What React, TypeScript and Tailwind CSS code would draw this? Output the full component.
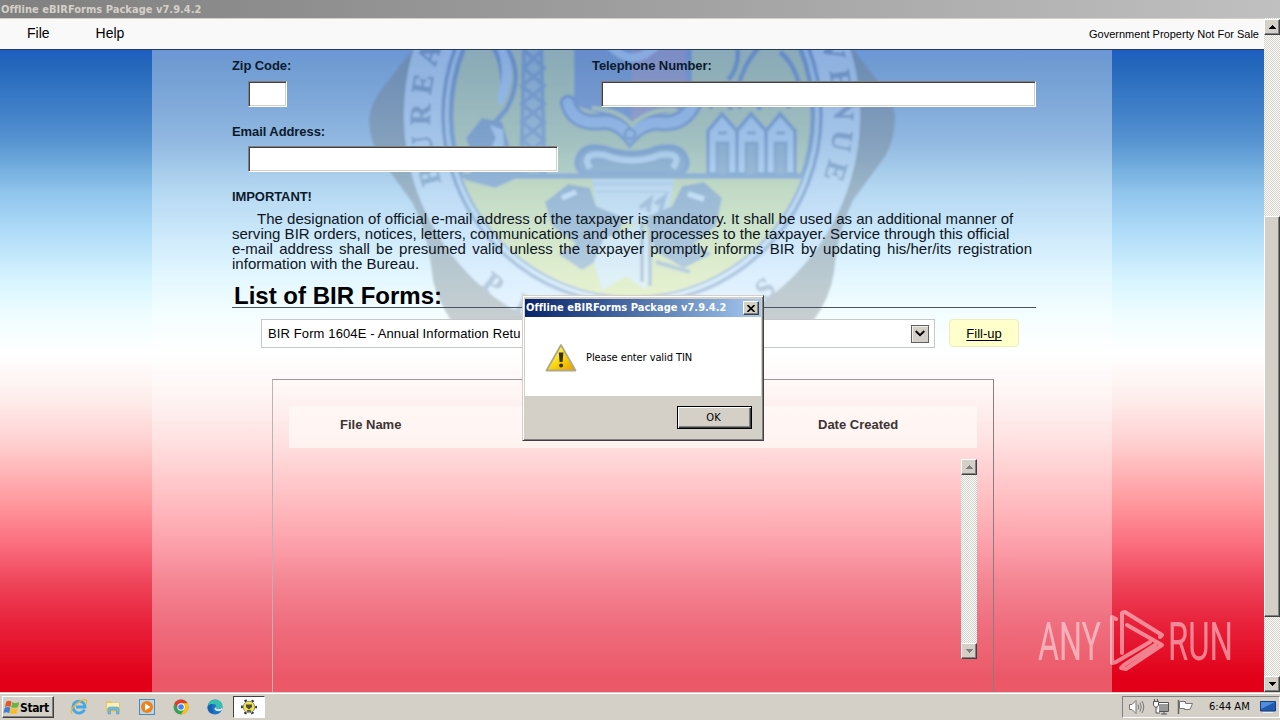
import type { ReactNode } from "react";

const raised = "border border-t-white border-l-white border-r-[#404040] border-b-[#404040] bg-[#d4d0c8] shadow-[inset_-1px_-1px_0_#808080]";
const track = "bg-[conic-gradient(#fff_25%,#d4d0c8_0_50%,#fff_0_75%,#d4d0c8_0)] bg-[length:2px_2px]";

function Arrow({ up, color = "#000" }: { up?: boolean; color?: string }) {
  return (
    <svg width="7" height="4" viewBox="0 0 7 4" shapeRendering="crispEdges">
      <path d={up ? "M0 4h7L3.5 0z" : "M0 0h7L3.5 4z"} fill={color} />
    </svg>
  );
}

function ScrollButton({ up, color }: { up?: boolean; color?: string }) {
  return (
    <div className={`flex h-4 w-4 shrink-0 items-center justify-center ${raised}`}>
      <Arrow up={up} color={color} />
    </div>
  );
}

function Field({ className }: { className: string }) {
  return (
    <div
      className={`h-[26px] border border-t-[#808080] border-l-[#808080] border-r-white border-b-white bg-white shadow-[inset_1px_1px_0_#404040,inset_-1px_-1px_0_#d4d0c8] ${className}`}
    />
  );
}

function Label({ children, className = "" }: { children: ReactNode; className?: string }) {
  return <div className={`h-4 text-[13px] leading-[18px] font-bold tracking-[-0.08px] whitespace-nowrap text-[#0c1a2c] ${className}`}>{children}</div>;
}

function Seal() {
  return (
    <svg className="absolute top-0 left-0" width="960" height="269" viewBox="152 50 960 269">
      <defs>
        <path id="ring-top" d="M443 186A202 202 0 1 1 821 186" />
        <path id="ring-bottom" d="M404 115A228 228 0 0 0 860 115" />
        <clipPath id="disc">
          <circle cx="632" cy="115" r="181" />
        </clipPath>
        <filter id="soft">
          <feGaussianBlur stdDeviation="1" />
        </filter>
      </defs>
      <g opacity="0.33" filter="url(#soft)">
        <path
          d="M420 40L385 85Q370 102 369 120Q370 142 380 158L412 202Q428 232 433 280Q437 300 454 325H810Q830 300 834 272Q838 230 853 200L886 155Q895 138 895 115Q892 96 880 84L846 40z"
          fill="#6a7076"
        />
        <circle cx="632" cy="115" r="228" fill="#d0e2fc" />
        <circle cx="632" cy="115" r="189" fill="#c4d9f4" stroke="#5272aa" strokeWidth="4" />
        <circle cx="632" cy="115" r="181" fill="#c6d282" stroke="#5272aa" strokeWidth="5" />
        <g fill="#5d76a0" stroke="#5d76a0" strokeWidth="1" fontFamily="Liberation Serif" fontWeight="bold" fontSize="29">
          <text letterSpacing="9">
            <textPath href="#ring-top" startOffset="4">BUREAU</textPath>
          </text>
          <text letterSpacing="9" textAnchor="end">
            <textPath href="#ring-top" startOffset="100%">REVENUE</textPath>
          </text>
          <text letterSpacing="22" textAnchor="middle">
            <textPath href="#ring-bottom" startOffset="51%">PILIPINAS</textPath>
          </text>
        </g>
        <g clipPath="url(#disc)">
          <path d="M440 176H830V320H440z" fill="#dde070" />
          <path d="M500 40Q528 70 506 110L490 128M488 40Q506 60 502 100" fill="none" stroke="#5272aa" strokeWidth="5" />
          <path d="M503 45Q520 70 503 103Q495 108 499 90Q506 68 496 45z" fill="#bcd4fa" />
          <path d="M466 138L482 118L502 122L510 148L522 176L495 188L465 180L474 168L470 150z" fill="#5c78a6" />
          <path d="M490 125L503 130L504 146L490 150L496 138z" fill="#bcd4fa" />
          <path d="M523 40H541L546 176H520z" fill="#9db4c0" />
          <path d="M524 40L521 176M541 40L545 176" stroke="#6280ae" strokeWidth="4" />
          <path d="M524 50L544 68L522 86L544 104L522 122L544 140L522 158L544 174M542 50L524 68L544 86L522 104L544 122L522 140L544 158L522 174" fill="none" stroke="#6280ae" strokeWidth="4" />
          <path d="M574 40V105L632 124L692 105V40z" fill="#5f79bc" />
          <path d="M632 40V124L686 106V40z" fill="#9d78a8" />
          <path d="M605 40Q632 75 662 40" fill="none" stroke="#bcd4fa" strokeWidth="8" />
          <path d="M568 103Q574 125 601 122Q617 120 630 136Q645 120 663 123Q684 124 694 104" fill="none" stroke="#5272aa" strokeWidth="17" strokeLinecap="round" />
          <path d="M568 103Q574 125 601 122Q617 120 630 136Q645 120 663 123Q684 124 694 104" fill="none" stroke="#9db9ee" strokeWidth="10" strokeLinecap="round" />
          <path d="M592 108Q620 110 632 125Q650 108 676 110" fill="none" stroke="#d7df7a" strokeWidth="4" />
          <circle cx="630" cy="134" r="5" fill="none" stroke="#5272aa" strokeWidth="3" />
          <path d="M600 174Q574 176 577 160Q582 142 606 148Q632 158 656 148Q682 142 687 160Q690 176 665 174z" fill="#6d87a6" stroke="#5272aa" strokeWidth="5" />
          <path d="M590 168Q580 152 604 155Q632 166 660 155Q684 152 673 168" fill="none" stroke="#d0e2fa" strokeWidth="6" />
          <path d="M450 176H820" stroke="#5c78a6" strokeWidth="6" />
          <path d="M592 179H674L668 214Q632 232 598 214z" fill="#cfe0f0" />
          <path d="M592 184H674M596 192H670" stroke="#a9bfd6" strokeWidth="2" />
          <path d="M640 208L650 200L648 212M655 204L664 198L660 212" stroke="#7a90b0" strokeWidth="5" fill="none" />
          {[708, 737, 766].map((x) => (
            <g key={x}>
              <path d={`M${x} 174V131L${x + 14} 114L${x + 29} 131V174z`} fill="#bcd4fa" stroke="#5272aa" strokeWidth="4" />
              <path d={`M${x + 9} 174V143H${x + 20}V174M${x + 10} 133h9`} fill="#7890aa" stroke="#5f7aa2" strokeWidth="3" />
            </g>
          ))}
          <path d="M736 40Q742 65 728 80M766 40Q744 60 738 88M780 52Q796 65 800 90M709 108Q726 90 731 110M738 108Q754 88 760 110M768 106Q780 90 790 108" fill="none" stroke="#5272aa" strokeWidth="5" />
          <path d="M545 202L568 184L590 188L596 206L624 218L612 252L582 270L558 254L576 244L552 226z" fill="#5f7a9c" />
          <path d="M722 198L704 182L682 186L672 206L644 218L656 252L684 268L712 254L694 244L716 226z" fill="#5f7a9c" />
          <path d="M562 198l14-6M688 194l16 5" stroke="#d8e9ff" strokeWidth="5" />
          <path d="M604 238L622 234L640 222L652 250L646 290L626 276L602 290L594 262z" fill="#d7e4ec" />
          <path d="M642 222V282M650 215V286M656 262L690 272" stroke="#6a84a0" strokeWidth="4" fill="none" />
        </g>
      </g>
    </svg>
  );
}

function FormPanel() {
  return (
    <div className="relative h-[642px] w-[960px] overflow-hidden bg-white/35 pl-20">
      <Seal />
      <div className="relative w-[804px] pt-[7px]">
        <div className="flex justify-between">
          <div>
            <Label>Zip Code:</Label>
            <Field className="mt-2 ml-4 w-[39px]" />
          </div>
          <div className="w-[444px]">
            <Label>Telephone Number:</Label>
            <Field className="mt-2 ml-[9px]" />
          </div>
        </div>
        <Label className="mt-4">Email Address:</Label>
        <Field className="mt-[7px] ml-4 w-[310px]" />
        <Label className="mt-4">IMPORTANT!</Label>
        <div className="mt-[7px] h-[60px] text-[15px] leading-[15px] tracking-[0.012px] whitespace-nowrap text-[#0c1420]">
          <p className="pl-[25px]">The designation of official e-mail address of the taxpayer is mandatory. It shall be used as an additional manner of</p>
          <p>serving BIR orders, notices, letters, communications and other processes to the taxpayer. Service through this official</p>
          <p className="w-[800px] whitespace-normal [text-align-last:justify]">e-mail address shall be presumed valid unless the taxpayer promptly informs BIR by updating his/her/its registration</p>
          <p>information with the Bureau.</p>
        </div>
        <h2 className="mt-[10px] h-[27px] border-b border-[#4a5560] pl-0.5 text-[24px] leading-[30px] font-bold text-black">List of BIR Forms:</h2>
        <div className="mt-[11px] flex h-[29px] pl-[29px]">
          <div className="flex w-[674px] items-center justify-between border border-[#c4c8c8] bg-white pr-[5px] pl-1.5 text-[13px]">
            <span className="tracking-[0.12px]">BIR Form 1604E - Annual Information Retu</span>
            <span className="flex h-[18px] w-[18px] items-center justify-center border border-[#606060] bg-[#d4d0c8] shadow-[inset_1px_1px_0_#eee]">
              <svg width="10" height="7" viewBox="0 0 10 7">
                <path d="M0.700 1L5 5.200L9.300 1" fill="none" stroke="#000" strokeWidth="1.900" />
              </svg>
            </span>
          </div>
          <button className="ml-[14px] h-7 w-[70px] rounded-[4px] border border-[#eeeeb8] bg-[#ffffcc] pt-0.5 text-[13px] underline underline-offset-2">Fill-up</button>
        </div>
        <div className="ml-10 mt-[31px] h-[330px] w-[722px] border border-b-0 border-t-[#999] border-r-[#8c7c7e] border-l-[#bcb2b2] px-4 pt-[26px]">
          <div className="flex h-[42px] items-center bg-[#fffaf5]/75 pb-1 text-[13px] font-bold text-[#3c3432]">
            <span className="w-[478px] pl-[51px]">File Name</span>
            <span className="pl-[51px]">Date Created</span>
          </div>
          <div className={`mt-[11px] ml-auto flex h-[200px] w-4 flex-col justify-between ${track}`}>
            <ScrollButton up color="#808080" />
            <ScrollButton color="#808080" />
          </div>
        </div>
      </div>
    </div>
  );
}

function MessageBox() {
  return (
    <div className="absolute top-[295px] left-[522px] flex h-[146px] w-[242px] flex-col border border-t-[#d4d0c8] border-l-[#d4d0c8] border-r-[#404040] border-b-[#404040] bg-[#d4d0c8] p-0.5 shadow-[inset_1px_1px_0_#fff,inset_-1px_-1px_0_#808080]">
      <div className="mt-px flex h-[18px] shrink-0 items-center justify-between bg-linear-to-r from-[#0a246a] to-[#a6caf0] pr-0.5 pl-px">
        <span className="pt-px font-['DejaVu_Sans_Condensed','DejaVu_Sans',sans-serif] text-[11px] font-bold tracking-[0.03px] whitespace-nowrap text-white">Offline eBIRForms Package v7.9.4.2</span>
        <span className={`flex h-[14px] w-4 items-center justify-center ${raised}`}>
          <svg width="8" height="7" viewBox="0 0 8 7">
            <path d="M0.500 0L7.500 7M7.500 0L0.500 7" stroke="#000" strokeWidth="1.600" />
          </svg>
        </span>
      </div>
      <div className="flex h-[79px] shrink-0 items-center bg-white pt-0.5 pl-5 font-['DejaVu_Sans_Condensed','DejaVu_Sans',sans-serif] text-[11px]">
        <svg width="32" height="30" viewBox="0 0 32 30">
          <defs>
            <linearGradient id="warn" x1="0" y1="0" x2="1" y2="1">
              <stop offset="0.3" stopColor="#fff04a" />
              <stop offset="0.6" stopColor="#f8cf00" />
              <stop offset="1" stopColor="#e89a00" />
            </linearGradient>
          </defs>
          <path d="M16 2L30.500 27.500H1.500z" fill="url(#warn)" stroke="#b0a888" strokeWidth="1.800" strokeLinejoin="round" />
          <path d="M13.800 9.500h4.600l-.8 9.500h-3z" fill="#33300c" />
          <circle cx="16.100" cy="22.600" r="2" fill="#33300c" />
        </svg>
        <span className="ml-[9px] pt-0.5 tracking-[-0.09px]">Please enter valid TIN</span>
      </div>
      <div className="flex justify-end pt-[10px] pr-[9px]">
        <button className="h-[23px] w-[75px] border border-black bg-[#d4d0c8] pt-px pr-0.5 font-['DejaVu_Sans_Condensed','DejaVu_Sans',sans-serif] text-[11px] shadow-[inset_1px_1px_0_#fff,inset_-1px_-1px_0_#404040,inset_-2px_-2px_0_#808080]">OK</button>
      </div>
    </div>
  );
}

function Watermark() {
  return (
    <svg className="absolute top-[605px] left-[1034px]" width="204" height="72" viewBox="1034 605 204 72" opacity="0.48">
      <g fill="#fff" fontFamily="Roboto" fontWeight="400" fontSize="53">
        <text x="1038" y="660" textLength="63" lengthAdjust="spacingAndGlyphs">ANY</text>
        <text x="1168" y="660" textLength="65" lengthAdjust="spacingAndGlyphs">RUN</text>
      </g>
      <g fill="none" stroke="#fff" strokeWidth="4" strokeLinejoin="round" strokeLinecap="round">
        <path d="M1116 619L1112 617V663L1116 662L1150 642" />
        <path d="M1122 653V613L1125 612L1162 635L1160 637" />
        <path d="M1127 625L1162 645L1126 669L1121 668L1124 665L1155 645" />
      </g>
    </svg>
  );
}

function StartFlag() {
  return (
    <svg width="17" height="17" viewBox="0 0 16 16">
      <path d="M3 2.500Q5.500 1 8 2.500L7 7.500Q4.500 6 1.800 7.500z" fill="#e5542a" />
      <path d="M8.700 3Q12 4.500 15.300 2.800L14.200 7.500Q11 9 7.800 7.700z" fill="#6db33f" />
      <path d="M1.600 8.200Q4.500 6.700 6.900 8.200L5.800 13.300Q3 11.700 0.300 13.300z" fill="#3f7fd0" />
      <path d="M7.600 8.500Q11 10 14 8.500L12.800 13.300Q9.500 15 6.500 13.500z" fill="#f7bd26" />
    </svg>
  );
}

function IeIcon() {
  return (
    <svg width="18" height="18" viewBox="0 0 18 18">
      <path d="M14.500 11.500A6 6 0 1 1 15 9H6" fill="none" stroke="#45a8e4" strokeWidth="2.800" />
      <path d="M2 15.500Q-1 12 7 5.500Q14 0 16.500 2.500Q17.500 4 15.500 6" fill="none" stroke="#e5b73b" strokeWidth="1.300" />
    </svg>
  );
}

function FolderIcon() {
  return (
    <svg width="18" height="18" viewBox="0 0 18 18">
      <path d="M2 3h5l1 1.500h8V14H2z" fill="#e7c766" />
      <path d="M3 5h12v5H3z" fill="#fbf0b6" />
      <path d="M4 16V11Q4 9 6 9H13Q15 9 15 11V16H12.500V12H6.500V16z" fill="#75b9dc" stroke="#4d91b8" strokeWidth="0.500" />
    </svg>
  );
}

function PlayerIcon() {
  return (
    <svg width="18" height="18" viewBox="0 0 18 18">
      <rect x="1.500" y="1.500" width="15" height="15" fill="#b7d9ef" stroke="#5586ad" />
      <circle cx="9" cy="9" r="6" fill="#f08018" />
      <path d="M7 5.500L12.500 9L7 12.500z" fill="#fff" />
    </svg>
  );
}

function ChromeIcon() {
  return (
    <svg width="18" height="18" viewBox="0 0 18 18">
      <circle cx="9" cy="9" r="7.500" fill="#34a353" />
      <path d="M2.500 5.250A7.500 7.500 0 0 1 15.500 5.250H9L5.700 10.900z" fill="#e33b2e" />
      <path d="M15.500 5.250A7.500 7.500 0 0 1 9 16.500L12.300 10.900L9 5.250z" fill="#fbc116" />
      <circle cx="9" cy="9" r="3.700" fill="#fff" />
      <circle cx="9" cy="9" r="2.800" fill="#4285f4" />
    </svg>
  );
}

function EdgeIcon() {
  return (
    <svg width="18" height="18" viewBox="0 0 18 18">
      <circle cx="9" cy="9" r="7.500" fill="#1b74c8" />
      <path d="M1.700 8Q3 1.500 9 1.500Q16.500 2 16.500 8Q16 11 12 11Q9.500 10.500 10.500 9Q10 6 7 6Q3.500 6 1.700 8z" fill="#39bfae" />
      <path d="M10.500 9Q9.500 10.800 12 11Q15 11.300 16.200 9.500L16 12Q12 14.500 9 12Q7.500 9.500 10.500 9z" fill="#d4e6ee" />
      <path d="M7 6Q4 9.500 7.500 14L5 15.500Q1 13 1.600 8.500Q3 6 7 6z" fill="#1760ae" />
    </svg>
  );
}

function SealIcon() {
  return (
    <svg width="18" height="18" viewBox="0 0 18 18">
      <circle cx="9" cy="9" r="7" fill="none" stroke="#30383c" strokeWidth="2" strokeDasharray="2.600 4.730" strokeDashoffset="1.300" />
      <circle cx="9" cy="9" r="5.800" fill="#f0e24a" stroke="#8d9280" />
      <path d="M6 6.500h6v2.500L9 11.500L6 9z" fill="#504a38" />
      <path d="M7 13h4" stroke="#304060" strokeWidth="1.500" />
    </svg>
  );
}

function Taskbar() {
  return (
    <div className="flex h-7 items-center bg-[#d4d0c8] pt-0.5 shadow-[inset_0_1px_0_#d4d0c8,inset_0_2px_0_#fff]">
      <div className={`ml-0.5 flex h-[22px] w-[52px] items-center font-['DejaVu_Sans_Condensed','DejaVu_Sans',sans-serif] text-[12px] font-bold ${raised}`}>
        <StartFlag />
        <span className="pt-px tracking-[-0.4px]">Start</span>
      </div>
      <div className="ml-4 flex gap-4">
        <IeIcon />
        <FolderIcon />
        <PlayerIcon />
        <ChromeIcon />
        <EdgeIcon />
      </div>
      <div className="ml-[9px] flex h-[22px] w-8 items-center justify-center border border-t-[#404040] border-l-[#404040] border-r-white border-b-white bg-white">
        <SealIcon />
      </div>
      <div className="ml-auto flex h-[22px] w-[158px] items-center border border-t-[#808080] border-l-[#808080] border-r-white border-b-white pl-1.5">
        <svg width="16" height="16" viewBox="0 0 16 16" fill="none" stroke="#777">
          <path d="M0.500 5.500H3L7 1.500V14.500L3 10.500H0.500z" fill="#fff" />
          <path d="M9 5.500Q10.500 8 9 10.500M11 3.500Q13.500 8 11 12.500M13 2Q16.500 8 13 14" />
        </svg>
        <svg className="ml-2" width="16" height="16" viewBox="0 0 16 16">
          <path d="M5.500 4.500H15.500V12.500H5.500z" fill="#999" stroke="#fff" />
          <path d="M4.500 3.500H15.500V12.500H6M8 15h6M11 13v2" fill="none" stroke="#555" />
          <path d="M0.500 2.500H5.500V6.500L3 8.500L0.500 6.500zM1.500 0V3M4.500 0V3M3 8V14H7" fill="#fff" stroke="#555" />
        </svg>
        <svg className="ml-2" width="17" height="16" viewBox="0 0 17 16">
          <path d="M2.500 2.500H8.500V4.500H15.500L13 10.500H7.500V9.500H2.500z" fill="#fff" stroke="#777" />
          <path d="M1.500 1V15" stroke="#666" strokeWidth="1.500" />
        </svg>
        <span className="ml-[15px] pt-px font-['DejaVu_Sans_Condensed','DejaVu_Sans',sans-serif] text-[11px] whitespace-nowrap">6:44 AM</span>
        <svg className="mr-[3px] ml-auto" width="16" height="14" viewBox="0 0 16 14">
          <path d="M0.500 1.500H15.500V11H0.500z" fill="#2059b0" stroke="#163f80" />
          <path d="M1 2H15L1 9z" fill="#4f8ddd" />
          <path d="M3 12.500h10" stroke="#e8f0f8" />
        </svg>
      </div>
    </div>
  );
}

export default function App() {
  return (
    <div className="relative flex h-[720px] w-[1280px] flex-col overflow-hidden bg-[#d4d0c8] font-['Liberation_Sans',Arial,sans-serif] text-black">
      <div className="h-[18px] bg-linear-to-r from-[#808080] to-[#c0c0c0] pl-px font-['DejaVu_Sans_Condensed','DejaVu_Sans',sans-serif] text-[11px] leading-[19px] font-bold tracking-[0.03px] text-[#d4d0c8]">
        Offline eBIRForms Package v7.9.4.2
      </div>
      <div className="flex h-[674px]">
        <div className="w-[1264px]">
          <div className="flex h-8 items-center border-t border-b border-t-[#d4d0c8] border-b-[#263a50] bg-[#f9f9f9] pb-0.5 text-[14px]">
            <span className="ml-[27px]">File</span>
            <span className="ml-[46px]">Help</span>
            <span className="mr-[5px] ml-auto pt-0.5 text-[11px]">Government Property Not For Sale</span>
          </div>
          <div className="flex justify-center bg-[linear-gradient(#1f5ec4_0px,#2266ba_12px,#3a7ac6_50px,#5592d0_90px,#78b2e0_122px,#8fc4ec_142px,#b0dcf8_183px,#d6f4ff_229px,#effdff_266px,#fff_304px,#fdeeec_348px,#ffd3d3_389px,#ff9a9f_451px,#fb7080_492px,#ee4358_534px,#e8203a_575px,#e10018_628px)]">
            <FormPanel />
          </div>
        </div>
        <div className={`flex w-4 flex-col pt-px ${track}`}>
          <ScrollButton up />
          <div className={`mt-[181px] h-[401px] ${raised}`} />
          <div className="mt-auto">
            <ScrollButton />
          </div>
        </div>
      </div>
      <Taskbar />
      <Watermark />
      <MessageBox />
    </div>
  );
}
